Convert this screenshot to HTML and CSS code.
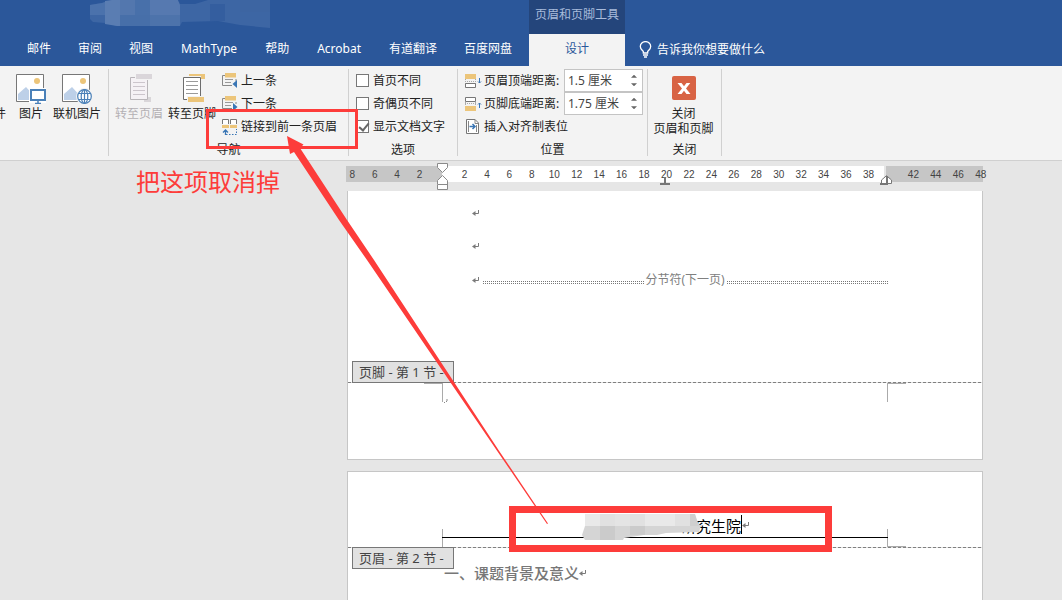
FILE: index.html
```html
<!DOCTYPE html>
<html lang="zh-CN">
<head>
<meta charset="utf-8">
<title>页眉和页脚工具</title>
<link rel="stylesheet" href="styles.css">
</head>
<body>
<svg class="defs" aria-hidden="true">
  <symbol id="ret" viewBox="0 0 8 8"><path d="M6.500 1V4.500H2" fill="none" stroke="#7a7a7a"/><path d="M0 4.500L3.500 2V7Z" fill="#7a7a7a"/></symbol>
</svg>
<div class="app">
  <header class="titlebar">
    <svg class="blur" width="180" height="28" viewBox="0 0 180 28" aria-hidden="true">
      <path d="M0 5L12 3L22 0H180V28L150 25L128 21L92 22L90 26H27L15 23L3 22L0 19Z" fill="#3d66a4"/>
      <path d="M0 5L12 3L15 2V15H0Z" fill="#4b72ac"/><path d="M15 1L22 0H30V26H27L15 24Z" fill="#5a7db2"/>
      <path d="M30 0H45V15H30Z" fill="#5377ae"/><path d="M45 0H60V15H45Z" fill="#4870aa"/>
      <path d="M60 0H88L90 5V15H60Z" fill="#5679b0"/><path d="M30 15H60V26H30Z" fill="#476fa9"/><path d="M60 15H90V26H60Z" fill="#4d73ab"/>
      <path d="M88 0H118L105 4L90 4Z" fill="#2b579a"/><path d="M120 4H135V21H120Z" fill="#345e9f"/><path d="M150 0H180V12H150Z" fill="#3d65a2"/>
    </svg>
    <nav class="tabs">
      <a href="#">邮件</a><a href="#">审阅</a><a href="#">视图</a><a href="#" class="latin">MathType</a><a href="#">帮助</a><a href="#" class="latin">Acrobat</a><a href="#">有道翻译</a><a href="#">百度网盘</a>
    </nav>
    <div class="context">
      <div class="context-title">页眉和页脚工具</div>
      <a href="#" class="context-tab">设计</a>
    </div>
    <button class="tell">
      <svg width="13" height="17" viewBox="0 0 13 17" fill="none" stroke="#fff" stroke-width="1.300" aria-hidden="true"><path d="M4.300 12V10.500C3 9 1.300 8 1.300 5.500A5.200 4.900 0 0 1 11.700 5.500C11.700 8 10 9 8.700 10.500V12Z"/><path d="M4 14H9M5 16H8"/></svg>
      <span>告诉我你想要做什么</span>
    </button>
  </header>

  <div class="ribbon">
    <section class="group g-insert">
      <div class="tools">
        <button class="big cut"><span>件</span></button>
        <button class="big pic">
          <svg width="30" height="30" viewBox="0 0 30 30" aria-hidden="true"><path d="M.5.5H27.500V27.500H.5Z" fill="#fff" stroke="#777"/><circle cx="21" cy="7" r="3" fill="#ecc57a"/><path d="M2 26V20L10 13L20 24V26Z" fill="#bdd0e8"/><path d="M13 14H31V29H13Z" fill="#fff"/><path d="M15 16H29V26H15Z" fill="#fff" stroke="#4a80b8" stroke-width="2"/><path d="M22 27V29M19 29.500H25" stroke="#4a80b8" stroke-width="1.500"/></svg>
          <span>图片</span></button>
        <button class="big online">
          <svg width="30" height="30" viewBox="0 0 30 30" aria-hidden="true"><path d="M.5.5H27.500V27.500H.5Z" fill="#fff" stroke="#777"/><circle cx="21" cy="7" r="3" fill="#ecc57a"/><path d="M2 26V20L10 13L20 24V26Z" fill="#bdd0e8"/><circle cx="22.500" cy="22.500" r="8.500" fill="#f3f3f3"/><g fill="#fff" stroke="#4a80b8" stroke-width="1.200"><circle cx="22.500" cy="22.500" r="6.800"/><ellipse cx="22.500" cy="22.500" rx="3.300" ry="6.800"/><path d="M22.500 15.500V29.500M16.500 19.500H28.500M16.500 25.500H28.500" fill="none"/></g></svg>
          <span>联机图片</span></button>
      </div>
    </section>

    <section class="group g-nav">
      <div class="tools">
        <button class="big" disabled>
          <svg width="22" height="30" viewBox="1 0 22 30" aria-hidden="true"><path d="M15 23H22V28H15Z" fill="#d9d6d9"/><path d="M1.500 3.500H18.500V25.500H1.500Z" fill="#f5f1f5" stroke="#b9b5b9"/><path d="M6 0H24V6H6Z" fill="#f3f3f3"/><path d="M7 0H23V5H7Z" fill="#dad6da"/><path d="M4 8.500H16M4 12.500H16M4 16.500H16M4 20.500H16" stroke="#ccc5cc"/></svg>
          <span>转至页眉</span></button>
        <button class="big">
          <svg width="22" height="30" viewBox="1 0 22 30" aria-hidden="true"><path d="M7 0H23V5H19V2H7Z" fill="#ecc57a"/><path d="M1.500 3.500H18.500V25.500H1.500Z" fill="#fff" stroke="#6d6d6d"/><path d="M4 7.500H16M4 11.500H16M4 15.500H16M4 19.500H16" stroke="#9a9a9a"/><path d="M5 22H24V29H5Z" fill="#f3f3f3"/><path d="M6 23H22V28H6Z" fill="#ecc57a"/></svg>
          <span>转至页脚</span></button>
        <div class="rows">
          <button class="row"><svg width="16" height="16" viewBox="0 0 16 16" aria-hidden="true"><path d="M3 2.500H.5V12.500H10M14 6V8" fill="none" stroke="#888"/><path d="M3 0H14V4.500H3Z" fill="#ecc57a"/><path d="M3 6.500H11M3 9.500H9" stroke="#999"/><path d="M15 7V15L10.500 11Z" fill="#3a76b5"/></svg><span>上一条</span></button>
          <button class="row"><svg width="16" height="16" viewBox="0 0 16 16" aria-hidden="true"><path d="M3 2.500H.5V12.500H10M14 6V8" fill="none" stroke="#888"/><path d="M3 0H14V4.500H3Z" fill="#ecc57a"/><path d="M3 6.500H11M3 9.500H9" stroke="#999"/><path d="M11 7V15L15.500 11Z" fill="#3a76b5"/></svg><span>下一条</span></button>
          <button class="row"><svg width="16" height="16" viewBox="0 0 16 16" aria-hidden="true"><path d="M.5 5V.5H6.500V5M8.500 5V.5H14.500V5" fill="#fff" stroke="#777"/><path d="M0 6H7V9H0ZM8 6H15V9H8Z" fill="#ecc57a"/><path d="M3.500 16V11.500M1 13.500L3.500 11L6 13.500" fill="none" stroke="#3a76b5" stroke-width="1.300"/><path d="M4 15.500H14.500V10" fill="none" stroke="#3a76b5" stroke-dasharray="1.500 1.500"/></svg><span>链接到前一条页眉</span></button>
        </div>
      </div>
      <h2>导航</h2>
    </section>

    <section class="group g-options">
      <div class="rows">
        <label class="row"><input type="checkbox"><span>首页不同</span></label>
        <label class="row"><input type="checkbox"><span>奇偶页不同</span></label>
        <label class="row"><input type="checkbox" checked><span>显示文档文字</span></label>
      </div>
      <h2>选项</h2>
    </section>

    <section class="group g-pos">
      <div class="rows">
        <div class="row"><svg width="17" height="16" viewBox="0 0 17 16" aria-hidden="true"><path d="M0 1H11V6H0Z" fill="#ecc57a"/><path d="M0 8.500H11M.5 6V11M10.500 6V11" stroke="#aaa" stroke-dasharray="1 1"/><path d="M.5 10.500H10.500V14.500H.5Z" fill="#fff" stroke="#777"/><path d="M14.500 5V10M13 8.500L14.500 10L16 8.500" fill="none" stroke="#3a76b5"/></svg><label for="top">页眉顶端距离:</label>
          <div class="spin"><input id="top" type="text" value="1.5 厘米"><div class="arrows"><button aria-label="增加页眉距离" class="up"></button><button aria-label="减少页眉距离" class="down"></button></div></div></div>
        <div class="row"><svg width="17" height="16" viewBox="0 0 17 16" aria-hidden="true"><path d="M.5 1.500H10.500V5.500H.5Z" fill="#fff" stroke="#777"/><path d="M0 7.500H11M.5 6V10M10.500 6V10" stroke="#aaa" stroke-dasharray="1 1"/><path d="M0 10H11V15H0Z" fill="#ecc57a"/><path d="M14.500 12V7M13 8.500L14.500 7L16 8.500" fill="none" stroke="#3a76b5"/></svg><label for="bottom">页脚底端距离:</label>
          <div class="spin"><input id="bottom" type="text" value="1.75 厘米"><div class="arrows"><button aria-label="增加页脚距离" class="up"></button><button aria-label="减少页脚距离" class="down"></button></div></div></div>
        <button class="row"><svg width="17" height="16" viewBox="0 0 17 16" aria-hidden="true"><path d="M1.500 .5H10L13.500 4V14.500H1.500Z" fill="#fff" stroke="#777"/><path d="M10 .5V4.500H13.500M3.500 2V13M11.500 6V13" fill="none" stroke="#888"/><path d="M4.500 7.500H10M7.500 5L10 7.500L7.500 10" fill="none" stroke="#3a76b5" stroke-width="1.500"/></svg><span>插入对齐制表位</span></button>
      </div>
      <h2>位置</h2>
    </section>

    <section class="group g-close">
      <button class="close">
        <svg width="24" height="24" viewBox="0 0 24 24" aria-hidden="true"><rect width="24" height="24" rx="2" fill="#d86344"/><path d="M5.500 7H9.500L12 10.300L14.500 7H18.300L14 12.500L18.500 18H14.500L12 14.700L9.500 18H5.500L10 12.500Z" fill="#fff"/></svg>
        <span>关闭<br>页眉和页脚</span>
      </button>
      <h2>关闭</h2>
    </section>
  </div>

  <main class="work">
    <div class="ruler"><div class="scale">
      <span>8</span><span>6</span><span>4</span><span>2</span>
      <span class="mark"><svg class="indent" width="12" height="28" viewBox="0 0 12 28" fill="#fff" stroke="#8a8a8a" aria-hidden="true"><path d="M.5.5H10.500V4.500L5.500 9.500L.5 4.500ZM.5 21V17.500L5.500 12.500L10.500 17.500V26.500H.5V21.500H10.500"/></svg></span>
      <span>2</span><span>4</span><span>6</span><span>8</span><span>10</span><span>12</span><span>14</span><span>16</span><span>18</span>
      <span class="mark">20<svg class="tabstop" width="10" height="8" viewBox="0 0 10 8" aria-hidden="true"><path d="M5 0V6M0 7H10" stroke="#777" stroke-width="2"/></svg></span>
      <span>22</span><span>24</span><span>26</span><span>28</span><span>30</span><span>32</span><span>34</span><span>36</span><span>38</span>
      <span class="mark"><svg class="right" width="12" height="10" viewBox="0 0 12 10" aria-hidden="true"><path d="M1.500 8.500V5L6.500 .7L11.500 5V8.500Z" fill="#fff" stroke="#777"/><path d="M7 1V8M0 9H8" stroke="#777" stroke-width="2"/></svg></span>
      <span>42</span><span>44</span><span>46</span><span>48</span>
    </div></div>

    <article class="page first">
      <div class="body">
        <p><svg class="ret"><use href="#ret"/></svg></p>
        <p><svg class="ret"><use href="#ret"/></svg></p>
        <p class="break"><svg class="ret"><use href="#ret"/></svg><i></i><span>分节符(下一页)</span><i></i></p>
      </div>
      <footer class="foot">
        <div class="dash"></div>
        <div class="corners down-c"><span></span><span></span></div>
        <div class="tag">页脚 - 第 1 节 -</div>
        <svg class="footmark" width="4" height="4" viewBox="0 0 4 4" aria-hidden="true"><path d="M0 3.500H1M2 2.500H3M3 0V2" stroke="#888"/></svg>
      </footer>
    </article>

    <article class="page second">
      <div class="head">
        <div class="corners up-c"><span></span><span></span></div>
        <div class="headline">
          <svg class="mosaic" width="119" height="27" viewBox="0 0 119 27" aria-hidden="true"><path d="M3 22H41V27H3Z" fill="#fff"/><path d="M3 1H113L114 8L119 13L117 19L84 20L75 22L62 22L42 25L41 27H3L0 22L3 13Z" fill="#d5d5d5"/><path d="M3 1H18V13H3ZM63 1H93V13H63Z" fill="#e9e9e9"/><path d="M18 1H33V13H18ZM48 1H63V13H48ZM93 1H108V13H93Z" fill="#e1e1e1"/><path d="M33 1H48V13H33Z" fill="#e4e4e4"/><path d="M18 13H33V27H18ZM48 13H63V22H48Z" fill="#cbcbcb"/><path d="M108 1H113L117 13H108Z" fill="#cfcfcf"/></svg>
          <span>研究生院</span><b class="caret"></b><svg class="ret"><use href="#ret"/></svg>
        </div>
      </div>
      <div class="foot">
        <div class="dash"></div>
        <div class="tag under">页眉 - 第 2 节 -</div>
        <h1>一、课题背景及意义<svg class="ret"><use href="#ret"/></svg></h1>
      </div>
    </article>
  </main>

  <div class="callout link"></div>
  <div class="callout title"></div>
  <div class="note">把这项取消掉</div>
  <svg class="arrow" width="280" height="400" viewBox="280 130 280 400" aria-hidden="true"><path d="M287 136L303.500 144.500L300 148L347 220L374 260L498.500 450L548 523.500L547 524L496.500 450L367 260L339 220L294 152L290 154Z" fill="#fd3c3a"/></svg>
</div>
</body>
</html>
```
FILE: styles.css
```css
* { box-sizing: border-box; }
body { margin: 0; background: #e6e6e6; font: 12px/16px "Noto Sans", "Noto Sans CJK SC", sans-serif; color: #222; }
button, input { font: inherit; color: inherit; }
button { padding: 0; border: 0; background: none; }
a { color: inherit; text-decoration: none; }
h1, h2, p { margin: 0; font-weight: 400; }
svg { display: block; flex: none; }
.defs { position: absolute; width: 0; height: 0; }
.app { position: relative; height: 100vh; overflow: hidden; display: flex; flex-direction: column; }

.titlebar { position: relative; flex: none; display: flex; height: 66px; background: #2b579a; color: #fff; white-space: nowrap; }
.blur { position: absolute; left: 90px; top: 0; }
.tabs { display: flex; align-items: flex-end; gap: 27px; padding: 0 17px 9px 27px; }
.tabs .latin { padding: 0 1px; }
.context { width: 96px; text-align: center; }
.context-title { height: 34px; padding-top: 7px; background: #24457b; color: #a9bcdb; }
.context-tab { display: block; height: 32px; padding-top: 7px; background: #f3f3f3; color: #2b579a; }
.tell { display: flex; align-items: flex-end; gap: 5px; padding: 0 0 8px 14px; }

.ribbon { flex: none; display: flex; padding: 3px 0 4px; background: #f3f3f3; border-bottom: 1px solid #d0d0d0; white-space: nowrap; }
.group { display: flex; flex-direction: column; height: 87px; border-right: 1px solid #d0d0d0; }
.group h2 { margin-top: auto; font-size: 12px; line-height: 12px; text-align: center; }
.g-insert { width: 109px; }
.g-nav { width: 240px; padding-left: 6px; }
.g-nav h2 { margin-left: -6px; }
.g-options { width: 109px; }
.g-options .rows { padding-left: 7px; }
.g-pos { width: 190px; }
.g-pos .rows { padding-left: 7px; }
.g-close { width: 74px; }
.tools { display: flex; }
.big { display: flex; flex-direction: column; align-items: center; gap: 2px; padding-top: 5px; margin-right: 5px; align-self: flex-start; }
.big:disabled { color: #b3b0b3; }
.cut { width: 6px; height: 53px; align-items: flex-end; justify-content: flex-end; overflow: hidden; margin-right: 10px; }
.pic { margin-right: 7px; }
.rows { display: flex; flex-direction: column; }
.row { display: flex; align-items: center; height: 23px; gap: 4px; }
.g-nav .rows { padding-left: 1px; }
.g-nav .row { gap: 3px; }
.g-nav .big svg { margin-left: 4px; }
.g-pos .row { gap: 2px; }
.g-options input { appearance: none; width: 13px; height: 13px; margin: 0; border: 1px solid #777; background: #fff; }
.g-options input:checked::before { content: ""; display: block; width: 4px; height: 8px; margin: 0 0 0 4px; border: solid #666; border-width: 0 2px 2px 0; transform: rotate(40deg); }
.spin { display: flex; width: 79px; height: 23px; margin-left: auto; margin-right: 4px; border: 1px solid #c4c4c4; background: #fff; }
.spin input { flex: 1; min-width: 0; padding: 0 0 0 3px; border: 0; background: none; outline: 0; color: #444; }
.arrows { display: flex; flex-direction: column; justify-content: space-around; width: 15px; padding: 2px 0; }
.arrows button { width: 6px; height: 3px; margin-left: 4px; background: #666; }
.up { clip-path: polygon(50% 0, 100% 100%, 0 100%); }
.down { clip-path: polygon(0 0, 100% 0, 50% 100%); }
.close { display: flex; flex-direction: column; align-items: center; gap: 6px; padding: 7px 2px 0 0; line-height: 15px; }

.work { flex: 1; min-height: 0; padding: 5px 79px 0 346px; }
.ruler { height: 16px; margin-bottom: 9px; background: linear-gradient(90deg, #c6c6c6 96px, #fff 96px calc(100% - 99px), #e6e6e6 calc(100% - 99px) calc(100% - 97px), #c6c6c6 calc(100% - 97px)); }
.scale { display: grid; grid-template-columns: repeat(29, 1fr); margin: 0 -9px 0 -5px; font: 10px/17px "Liberation Sans", sans-serif; color: #444; text-align: center; }
.mark { position: relative; }
.indent { position: absolute; left: 6px; top: -3px; }
.tabstop { position: absolute; left: 5px; top: 11px; }
.right { position: absolute; left: 0; top: 9px; }

.page { margin-left: 1px; border: 1px solid #c6c6c6; background: #fff; }
.first { border-top: 0; margin-bottom: 11px; }
.second { height: 200px; }
.body { height: 191px; padding: 5px 94px 0 124px; }
.body p { display: flex; align-items: center; height: 33px; }
.ret { width: 8px; height: 8px; }
.body .break { gap: 1px; height: 35px; color: #808080; }
.break i { flex: 1; height: 3px; margin-top: 5px; background: conic-gradient(#777 25%, transparent 0) 0 0 / 2px 2px; }
.break .ret { margin-right: 1px; }
.foot { position: relative; }
.first .foot { height: 77px; }
.dash { height: 1px; background: repeating-linear-gradient(90deg, #808080 0 3px, #e0e0e0 3px 5px); }
.corners { display: flex; justify-content: space-between; padding: 0 76px; }
.corners span { width: 19px; height: 19px; border: 0 solid #aaa; }
.down-c span { border-width: 1px 1px 0 0; }
.down-c span + span { border-width: 1px 0 0 1px; }
.up-c span { height: 18px; border-right-width: 1px; }
.up-c span + span { border-width: 0 0 1px 1px; }
.tag { position: absolute; left: 4px; top: -21px; width: 102px; height: 22px; padding: 2px 0 0 6px; border: 1px solid #777; background: #e1e1e1; font-size: 13px; color: #444; white-space: nowrap; }
.under { top: 0; }
.footmark { position: absolute; left: 96px; top: 17px; }
.head { display: grid; height: 75px; }
.head > * { grid-area: 1 / 1; align-self: end; }
.headline { display: flex; align-items: center; justify-content: center; height: 26px; margin: 0 94px 9px; padding-left: 2px; border-bottom: 1px solid #000; font: 15px/20px "Noto Sans CJK SC", sans-serif; color: #000; white-space: nowrap; }
.headline span { padding-top: 2px; }
.mosaic { position: relative; margin: 1px -20px 0 0; align-self: flex-start; }
.caret { width: 1px; height: 19px; background: #000; }
h1 { display: flex; align-items: center; padding: 14px 0 0 96px; font: 500 15px/22px "Noto Sans CJK SC", sans-serif; color: #777; }

.callout { position: absolute; border: 3px solid #fd3c3a; }
.link { left: 206px; top: 109px; width: 152px; height: 40px; }
.title { left: 509px; top: 506px; width: 323px; height: 46px; border-width: 7px; }
.note { position: absolute; left: 136px; top: 166px; font-size: 24px; line-height: 32px; color: #fd3c3a; }
.arrow { position: absolute; left: 280px; top: 130px; }
```
